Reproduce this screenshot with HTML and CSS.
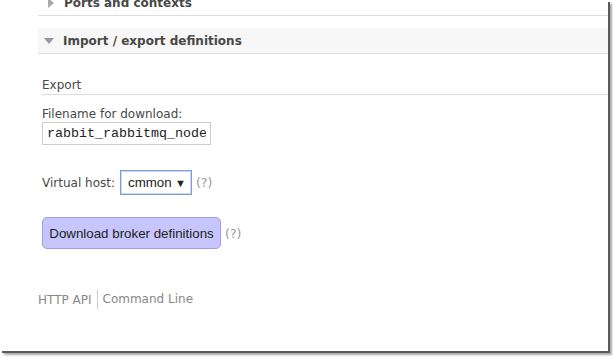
FILE: index.html
```html
<!DOCTYPE html>
<html lang="en">
<head>
    <meta charset="UTF-8">
    <title>RabbitMQ Management - Overview</title>
    <link rel="stylesheet" href="styles.css">
</head>
<body>

    <div class="frame">
        <!-- collapsed section -->
        <div class="section-head">
            <span class="arrow arrow-right"></span>
            <span>Ports and contexts</span>
        </div>

        <!-- open section -->
        <div class="section-head section-open">
            <span class="arrow arrow-down"></span>
            <span>Import / export definitions</span>
        </div>

        <div class="section-body">
            <h3>Export</h3>

            <label class="field-label" for="download-filename">Filename for download:</label>
            <input type="text" id="download-filename" value="rabbit_rabbitmq_node1.json">

            <div class="vhost-row">
                <span>Virtual host:</span>
                <div class="select-box">
                    <span>cmmon</span>
                    <span class="select-arrow">&#9660;</span>
                </div>
                <span class="help">(?)</span>
            </div>

            <div class="button-row">
                <button>Download broker definitions</button>
                <span class="help">(?)</span>
            </div>
        </div>

        <div id="footer">
            <a href="#">HTTP API</a>
            <a href="#">Command Line</a>
        </div>
    </div>

</body>
</html>
```

FILE: styles.css
```css
html {
    background-color: #fff;
}
body {
    margin: 0;
    padding-bottom: 6px;
    background-color: #fff;
    font-family: "DejaVu Sans", Verdana, sans-serif;
    font-size: 12px;
    color: #484848;
}
.frame {
    width: 570px;
    height: 351px;
    padding-left: 38px;
    overflow: hidden;
    background: #fff;
    box-shadow: 2px 2px 0 #5a5a5a, 4px 4px 2px rgba(0, 0, 0, 0.35);
}
.section-head {
    display: flex;
    align-items: center;
    height: 25px;
    margin-top: -10px;
    border-bottom: 1px solid #ddd;
    font-weight: bold;
    font-size: 12px;
    color: #484848;
}
.section-open {
    margin-top: 12px;
    background-color: #f7f7f7;
}
.arrow {
    display: inline-block;
    width: 0;
    height: 0;
    margin-right: 8px;
}
.arrow-right {
    margin-left: 10px;
    margin-right: 10px;
    border-top: 5px solid transparent;
    border-bottom: 5px solid transparent;
    border-left: 6px solid #aaa;
}
.arrow-down {
    margin-left: 6px;
    margin-right: 9px;
    border-left: 5px solid transparent;
    border-right: 5px solid transparent;
    border-top: 6px solid #999;
}
.section-body {
    padding-left: 4px;
}
h3 {
    margin: 23px 0 0 0;
    font-size: 12px;
    font-weight: normal;
    line-height: 16px;
    padding-bottom: 1px;
    border-bottom: 1px solid #ddd;
}
.field-label {
    display: block;
    margin-top: 12px;
    line-height: 15px;
}
input[type="text"] {
    display: block;
    box-sizing: border-box;
    width: 169px;
    height: 23px;
    margin: 0;
    padding: 0 4px;
    border: 1px solid #ccc;
    font-family: "Liberation Mono", "Courier New", monospace;
    font-size: 13.33px;
    color: #222;
}
.vhost-row {
    display: flex;
    align-items: center;
    margin-top: 25px;
}
.select-box {
    display: flex;
    align-items: center;
    box-sizing: border-box;
    width: 72px;
    height: 25px;
    margin-left: 5px;
    padding: 0 5px 0 7px;
    border: 1px solid #7b9fdc;
    box-shadow: inset 0 0 0 1px #c9d8f2;
    font-family: "Liberation Sans", Arial, sans-serif;
    font-size: 13.33px;
    color: #222;
}
.select-arrow {
    margin-left: auto;
    font-size: 11px;
    color: #222;
}
.help {
    margin-left: 4px;
    color: #999;
    font-size: 12.5px;
}
.button-row {
    display: flex;
    align-items: center;
    margin-top: 22px;
}
button {
    box-sizing: border-box;
    width: 179px;
    height: 32px;
    padding: 0;
    border: 1px solid #9c9cf0;
    border-radius: 5px;
    background-color: #c6c6fc;
    font-family: "Liberation Sans", Arial, sans-serif;
    font-size: 13.33px;
    color: #222;
}
#footer {
    display: flex;
    align-items: center;
    margin-top: 41px;
    height: 19px;
}
#footer a {
    color: #888;
    text-decoration: none;
    padding-right: 5px;
}
#footer a + a {
    padding-left: 5px;
    border-left: 1px solid #ccc;
    line-height: 19px;
}
```
